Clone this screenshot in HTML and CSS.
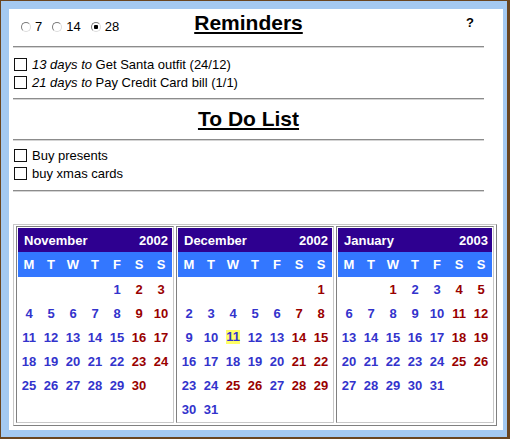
FILE: index.html
```html
<!DOCTYPE html>
<html lang="en">
<head>
    <meta charset="UTF-8">
    <meta name="viewport" content="width=device-width, initial-scale=1.0">
    <title>Reminders</title>
    <link rel="stylesheet" href="styles.css">
</head>
<body>
    <div class="panel">
        <div class="top">
            <div class="head-row">
                <div class="range">
                    <label class="opt"><input type="radio" name="range"> 7</label>
                    <label class="opt"><input type="radio" name="range"> 14</label>
                    <label class="opt"><input type="radio" name="range" checked> 28</label>
                </div>
                <h1 class="title">Reminders</h1>
                <span class="help">?</span>
            </div>
            <div class="rule"></div>

            <ul class="list">
                <li><input type="checkbox"><span><i>13 days to</i> Get Santa outfit (24/12)</span></li>
                <li><input type="checkbox"><span><i>21 days to</i> Pay Credit Card bill (1/1)</span></li>
            </ul>
            <div class="rule"></div>

            <h2 class="title todo-title">To Do List</h2>
            <div class="rule"></div>

            <ul class="list todos">
                <li><input type="checkbox"><span>Buy presents</span></li>
                <li><input type="checkbox"><span>buy xmas cards</span></li>
            </ul>
            <div class="rule"></div>
        </div>

        <div class="cals">
            <div class="month">
                <div class="month-head"><span>November</span><span>2002</span></div>
                <div class="days"><span>M</span><span>T</span><span>W</span><span>T</span><span>F</span><span>S</span><span>S</span></div>
                <div class="dates">
                    <span></span><span></span><span></span><span></span><span>1</span><span class="we">2</span><span class="we">3</span>
                    <span>4</span><span>5</span><span>6</span><span>7</span><span>8</span><span class="we">9</span><span class="we">10</span>
                    <span>11</span><span>12</span><span>13</span><span>14</span><span>15</span><span class="we">16</span><span class="we">17</span>
                    <span>18</span><span>19</span><span>20</span><span>21</span><span>22</span><span class="we">23</span><span class="we">24</span>
                    <span>25</span><span>26</span><span>27</span><span>28</span><span>29</span><span class="we">30</span>
                </div>
            </div>
            <div class="month">
                <div class="month-head"><span>December</span><span>2002</span></div>
                <div class="days"><span>M</span><span>T</span><span>W</span><span>T</span><span>F</span><span>S</span><span>S</span></div>
                <div class="dates">
                    <span></span><span></span><span></span><span></span><span></span><span></span><span class="we">1</span>
                    <span>2</span><span>3</span><span>4</span><span>5</span><span>6</span><span class="we">7</span><span class="we">8</span>
                    <span>9</span><span>10</span><span class="today">11</span><span>12</span><span>13</span><span class="we">14</span><span class="we">15</span>
                    <span>16</span><span>17</span><span>18</span><span>19</span><span>20</span><span class="we">21</span><span class="we">22</span>
                    <span>23</span><span>24</span><span class="we">25</span><span class="we">26</span><span>27</span><span class="we">28</span><span class="we">29</span>
                    <span>30</span><span>31</span>
                </div>
            </div>
            <div class="month">
                <div class="month-head"><span>January</span><span>2003</span></div>
                <div class="days"><span>M</span><span>T</span><span>W</span><span>T</span><span>F</span><span>S</span><span>S</span></div>
                <div class="dates">
                    <span></span><span></span><span class="we">1</span><span>2</span><span>3</span><span class="we">4</span><span class="we">5</span>
                    <span>6</span><span>7</span><span>8</span><span>9</span><span>10</span><span class="we">11</span><span class="we">12</span>
                    <span>13</span><span>14</span><span>15</span><span>16</span><span>17</span><span class="we">18</span><span class="we">19</span>
                    <span>20</span><span>21</span><span>22</span><span>23</span><span>24</span><span class="we">25</span><span class="we">26</span>
                    <span>27</span><span>28</span><span>29</span><span>30</span><span>31</span>
                </div>
            </div>
        </div>
    </div>
</body>
</html>
```

FILE: styles.css
```css
html {
    height: 100%;
}
body {
    margin: 0;
    height: 100%;
    box-sizing: border-box;
    border: solid #6a4520;
    border-width: 1px 3px 2px 1px;
    padding: 8px 4px 7px 8px;
    background: #a4c9f1;
    font-family: "Liberation Sans", Arial, sans-serif;
    font-size: 13px;
    color: #000;
}
.panel {
    height: 100%;
    box-sizing: border-box;
    padding: 0 6px 0 4px;
    background: #fff;
    overflow: hidden;
}
.top {
    width: 471px;
}
.head-row {
    display: grid;
    grid-template-columns: 1fr auto 1fr;
    align-items: start;
    height: 37px;
}
.range {
    display: flex;
    align-items: center;
    margin-top: 10px;
    padding-left: 8px;
    line-height: 16px;
}
.opt {
    display: flex;
    align-items: center;
    gap: 4px;
    margin-right: 10px;
}
.opt input {
    appearance: none;
    width: 10px;
    height: 10px;
    margin: 0;
    border: 1px solid;
    border-color: #7a7a7a #dcdcdc #dcdcdc #7a7a7a;
    border-radius: 50%;
    background: #fff;
}
.opt input:checked {
    background: radial-gradient(circle, #000 0 2px, #fff 2.5px);
}
.title {
    margin: 2px 0 0;
    font-size: 21px;
    line-height: 24px;
    font-weight: bold;
    text-align: center;
    text-decoration: underline;
}
.todo-title {
    margin: 7px 0 8px;
}
.help {
    justify-self: end;
    margin: 6px 10px 0 0;
    font-weight: bold;
}
.rule {
    height: 0;
    border-top: 1px solid #8c8c8c;
    border-bottom: 1px solid #d4d4d4;
}
.list {
    list-style: none;
    margin: 7px 0;
    padding: 0;
}
.todos {
    margin: 5px 0 8px;
}
.list li {
    display: flex;
    align-items: center;
    gap: 5px;
    height: 18px;
    padding-left: 1px;
}
.list input {
    appearance: none;
    width: 13px;
    height: 13px;
    margin: 0;
    border: 1px solid #111;
    background: #fff;
}
.cals {
    display: flex;
    gap: 2px;
    width: max-content;
    margin-top: 32px;
    padding: 1px 2px 2px;
    border: 1px solid;
    border-color: #c8c8c8 #808080 #808080 #c8c8c8;
}
.month {
    width: 154px;
    padding: 1px;
    border: 1px solid;
    border-color: #808080 #c8c8c8 #c8c8c8 #808080;
}
.month-head {
    display: flex;
    justify-content: space-between;
    align-items: center;
    height: 24px;
    padding: 0 4px 0 6px;
    background: #2e0090;
    color: #fff;
    font-weight: bold;
}
.days, .dates {
    display: grid;
    grid-template-columns: repeat(7, 22px);
    justify-items: center;
    align-items: center;
    font-weight: bold;
}
.days {
    height: 25px;
    background: #3377ff;
    color: #fff;
}
.dates {
    grid-auto-rows: 24px;
    color: #3333cc;
}
.dates .we {
    color: #990000;
}
.dates .today {
    line-height: 14px;
    background: #ffff66;
}
```
